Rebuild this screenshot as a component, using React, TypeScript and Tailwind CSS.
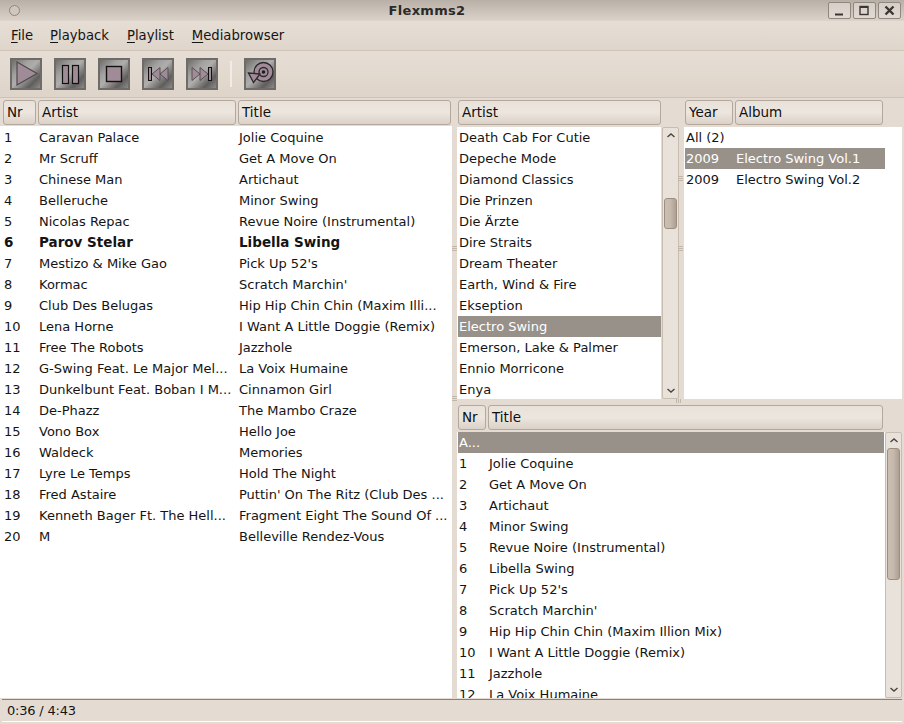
import type { ReactNode } from 'react';

const playlist = [
  ['1', 'Caravan Palace', 'Jolie Coquine'],
  ['2', 'Mr Scruff', 'Get A Move On'],
  ['3', 'Chinese Man', 'Artichaut'],
  ['4', 'Belleruche', 'Minor Swing'],
  ['5', 'Nicolas Repac', 'Revue Noire (Instrumental)'],
  ['6', 'Parov Stelar', 'Libella Swing'],
  ['7', 'Mestizo & Mike Gao', "Pick Up 52's"],
  ['8', 'Kormac', "Scratch Marchin'"],
  ['9', 'Club Des Belugas', 'Hip Hip Chin Chin (Maxim Illi...'],
  ['10', 'Lena Horne', 'I Want A Little Doggie (Remix)'],
  ['11', 'Free The Robots', 'Jazzhole'],
  ['12', 'G-Swing Feat. Le Major Mel...', 'La Voix Humaine'],
  ['13', 'Dunkelbunt Feat. Boban I M...', 'Cinnamon Girl'],
  ['14', 'De-Phazz', 'The Mambo Craze'],
  ['15', 'Vono Box', 'Hello Joe'],
  ['16', 'Waldeck', 'Memories'],
  ['17', 'Lyre Le Temps', 'Hold The Night'],
  ['18', 'Fred Astaire', "Puttin' On The Ritz (Club Des ..."],
  ['19', 'Kenneth Bager Ft. The Hell...', 'Fragment Eight The Sound Of ...'],
  ['20', 'M', 'Belleville Rendez-Vous'],
];

const artists = [
  'Death Cab For Cutie',
  'Depeche Mode',
  'Diamond Classics',
  'Die Prinzen',
  'Die Ärzte',
  'Dire Straits',
  'Dream Theater',
  'Earth, Wind & Fire',
  'Ekseption',
  'Electro Swing',
  'Emerson, Lake & Palmer',
  'Ennio Morricone',
  'Enya',
];

const tracks = [
  'Jolie Coquine',
  'Get A Move On',
  'Artichaut',
  'Minor Swing',
  'Revue Noire (Instrumental)',
  'Libella Swing',
  "Pick Up 52's",
  "Scratch Marchin'",
  'Hip Hip Chin Chin (Maxim Illion Mix)',
  'I Want A Little Doggie (Remix)',
  'Jazzhole',
  'La Voix Humaine',
];

function HeaderCell({ label, className }: { label: string; className: string }) {
  return (
    <div
      className={`h-[25px] shrink-0 rounded-[3px] border border-[#b4a89c] bg-gradient-to-b from-[#e9e2db] via-[#ece6df] to-[#dbd1c7] pl-[3px] text-[13.5px] leading-[23px] text-[#101010] ${className}`}
    >
      {label}
    </div>
  );
}

function ScrollBar({ thumbTop, thumbHeight }: { thumbTop: string; thumbHeight: string }) {
  return (
    <div className="relative h-full w-[17px] shrink-0 rounded-[2px] border border-[#c9bdb0] bg-[#e9e2da]">
      <svg className="absolute left-[3px] top-[4px]" width="10" height="7" viewBox="0 0 10 7">
        <path d="M1.5 5 L5 2 L8.5 5" fill="none" stroke="#4a4540" strokeWidth="1.4" />
      </svg>
      <div
        className={`absolute left-[1px] w-[13px] rounded-[3px] border border-[#9c8f82] bg-gradient-to-r from-[#cbbfb3] via-[#c6b9ac] to-[#ad9f91] ${thumbTop} ${thumbHeight}`}
      />
      <svg className="absolute bottom-[4px] left-[3px]" width="10" height="7" viewBox="0 0 10 7">
        <path d="M1.5 2 L5 5 L8.5 2" fill="none" stroke="#4a4540" strokeWidth="1.4" />
      </svg>
    </div>
  );
}

function ToolButton({ children }: { children: ReactNode }) {
  return (
    <button className="flex h-[32px] w-[32px] items-center justify-center border-2 border-[#6e6b68] bg-[linear-gradient(135deg,#6f6d6a_0%,#a2a09e_30%,#b0aeac_48%,#605e5c_78%,#8d8b89_100%)]">
      <svg width="28" height="28" viewBox="0 0 28 28" strokeLinejoin="miter">
        {children}
      </svg>
    </button>
  );
}

function WinButton({ children }: { children: ReactNode }) {
  return (
    <div className="flex h-[17px] w-[23px] items-center justify-center rounded-[2px] border border-[#8f8880] bg-gradient-to-b from-[#d6cfc7] to-[#e2dad2]">
      <svg width="13" height="13" viewBox="0 0 13 13">
        {children}
      </svg>
    </div>
  );
}

function MenuLabel({ first, rest, gap }: { first: string; rest: string; gap: string }) {
  return (
    <span className={gap}>
      <span className="underline underline-offset-2">{first}</span>
      {rest}
    </span>
  );
}

function GripH({ className }: { className: string }) {
  return (
    <div className={`absolute flex w-[5px] flex-col gap-[1px] ${className}`}>
      <div className="h-[1px] bg-[#c2b6a9]" />
      <div className="h-[1px] bg-[#c2b6a9]" />
      <div className="h-[1px] bg-[#c2b6a9]" />
    </div>
  );
}

export default function App() {
  return (
    <div
      className="relative flex h-[724px] w-[904px] flex-col overflow-hidden bg-[#e4dcd3] text-[13px] text-[#141414]"
      style={{ fontFamily: '"DejaVu Sans", sans-serif' }}
    >
      {/* window title */}
      <div className="flex h-[21px] shrink-0 items-center bg-gradient-to-b from-[#b8afa6] to-[#dcd4cb] pl-[9px] pr-[1px]">
        <div className="h-[11px] w-[11px] rounded-full border border-[#8e877f] bg-[#cfc8c0]" />
        <div className="flex-1 pl-[6px] text-center text-[13px] font-bold leading-[19px] tracking-[0.3px] text-[#2c2a28]">Flexmms2</div>
        <div className="flex gap-[2px] pr-[2px]">
          <WinButton>
            <path d="M2 10.5 H10" stroke="#3a3632" strokeWidth="2" />
          </WinButton>
          <WinButton>
            <rect x="2" y="2.5" width="8" height="8" fill="none" stroke="#3a3632" strokeWidth="1.4" />
            <path d="M2 3 H10" stroke="#3a3632" strokeWidth="2" />
          </WinButton>
          <WinButton>
            <path d="M2.5 2.5 L10.5 10.5 M10.5 2.5 L2.5 10.5" stroke="#3a3632" strokeWidth="2.4" />
          </WinButton>
        </div>
      </div>

      {/* menu bar */}
      <div className="flex h-[30px] shrink-0 items-center border-b border-[#cfc3b5] bg-gradient-to-b from-[#e6ded5] to-[#dfd5cb] pl-[11px] text-[13.2px] leading-[30px]">
        <MenuLabel first="F" rest="ile" gap="mr-[17px]" />
        <MenuLabel first="P" rest="layback" gap="mr-[18px]" />
        <MenuLabel first="P" rest="laylist" gap="mr-[18px]" />
        <MenuLabel first="M" rest="ediabrowser" gap="" />
      </div>

      {/* toolbar */}
      <div className="flex h-[47px] shrink-0 items-center border-b border-[#cfc3b5] bg-gradient-to-b from-[#e6ded5] to-[#ded4c9] pl-[10px]">
        <div className="flex gap-[12px]">
          <ToolButton>
            <path d="M5 2 L25 13.5 L5 25 Z" fill="#a08c97" stroke="#4f484c" strokeWidth="1.2" />
          </ToolButton>
          <ToolButton>
            <rect x="6.5" y="5.5" width="6" height="18" fill="#a08c97" stroke="#111" strokeWidth="1.2" />
            <rect x="16.5" y="5.5" width="6" height="18" fill="#a08c97" stroke="#111" strokeWidth="1.2" />
          </ToolButton>
          <ToolButton>
            <rect x="6.5" y="6.5" width="15" height="15" fill="#a08c97" stroke="#111" strokeWidth="1.4" />
          </ToolButton>
          <ToolButton>
            <rect x="4.5" y="7.5" width="3" height="13" fill="#a08c97" stroke="#111" strokeWidth="1" />
            <path d="M8 14 L16 7.5 V20.5 Z M16 14 L24 7.5 V20.5 Z" fill="#a08c97" stroke="#4f484c" strokeWidth="0.9" />
          </ToolButton>
          <ToolButton>
            <path d="M4 7.5 L12 14 L4 20.5 Z M12 7.5 L20 14 L12 20.5 Z" fill="#a08c97" stroke="#4f484c" strokeWidth="0.9" />
            <rect x="20.5" y="7.5" width="3" height="13" fill="#a08c97" stroke="#111" strokeWidth="1" />
          </ToolButton>
        </div>
        <div className="ml-[12px] h-[26px] w-[2px] bg-[#f1ece6]" />
        <div className="ml-[12px]">
          <ToolButton>
            <circle cx="17.5" cy="12" r="9.5" fill="#a08c97" stroke="#2e282b" strokeWidth="1.3" />
            <circle cx="17.5" cy="12" r="4.5" fill="#a08c97" stroke="#2e282b" strokeWidth="1.3" />
            <circle cx="17.5" cy="12" r="1.8" fill="#1c1a1b" />
            <path d="M2.5 13 L14 14 L7.5 22.5 Z" fill="#a08c97" stroke="#2e282b" strokeWidth="1.3" />
          </ToolButton>
        </div>
      </div>

      <div className="flex min-h-0 flex-1">
        {/* playlist */}
        <div className="flex w-[452px] shrink-0 flex-col pl-[3px] pt-[2px]">
          <div className="flex shrink-0 gap-[2px]">
            <HeaderCell label="Nr" className="w-[33px]" />
            <HeaderCell label="Artist" className="w-[198px]" />
            <HeaderCell label="Title" className="w-[213px]" />
          </div>
          <div className="-ml-[3px] mt-[1px] flex-1 bg-white pt-[1px]">
            {playlist.map(([nr, artist, title]) => (
              <div key={nr} className={`flex h-[21px] items-center ${nr === '6' ? 'text-[13.5px] font-bold' : ''}`}>
                <div className="w-[39px] shrink-0 pl-[4px]">{nr}</div>
                <div className="w-[200px] shrink-0 whitespace-nowrap">{artist}</div>
                <div className="whitespace-nowrap">{title}</div>
              </div>
            ))}
          </div>
        </div>

        <div className="flex min-w-0 flex-1 flex-col">
          <div className="flex h-[301px] shrink-0">
            {/* artist browser */}
            <div className="flex w-[227px] shrink-0 flex-col pl-[6px] pt-[2px]">
              <HeaderCell label="Artist" className="w-[203px]" />
              <div className="-ml-[1px] mt-[2px] flex min-h-0 flex-1">
                <div className="w-[204px] shrink-0 overflow-hidden bg-white pl-[1px]">
                  {artists.map((artist) => (
                    <div
                      key={artist}
                      className={`h-[21px] pl-[1px] leading-[21px] ${artist === 'Electro Swing' ? 'bg-[#989189] text-white' : ''}`}
                    >
                      {artist}
                    </div>
                  ))}
                </div>
                <div className="ml-[1px]">
                  <ScrollBar thumbTop="top-[70px]" thumbHeight="h-[31px]" />
                </div>
              </div>
            </div>

            {/* album browser */}
            <div className="flex min-w-0 flex-1 flex-col pt-[2px]">
              <div className="flex shrink-0 gap-[2px] pl-[6px]">
                <HeaderCell label="Year" className="w-[48px]" />
                <HeaderCell label="Album" className="w-[148px]" />
              </div>
              <div className="ml-[5px] mr-[2px] mt-[2px] flex-1 bg-white pl-[1px]">
                <div className="h-[21px] pl-[1px] leading-[21px]">All (2)</div>
                <div className="flex h-[21px] w-[200px] bg-[#989189] leading-[21px] text-white">
                  <span className="w-[51px] pl-[1px]">2009</span>
                  <span>Electro Swing Vol.1</span>
                </div>
                <div className="flex h-[21px] leading-[21px]">
                  <span className="w-[51px] pl-[1px]">2009</span>
                  <span>Electro Swing Vol.2</span>
                </div>
              </div>
            </div>
          </div>

          {/* tracks */}
          <div className="flex min-h-0 flex-1 flex-col pl-[6px] pt-[6px]">
            <div className="flex shrink-0 gap-[2px]">
              <HeaderCell label="Nr" className="w-[28px]" />
              <HeaderCell label="Title" className="w-[395px]" />
            </div>
            <div className="-ml-[1px] mt-[2px] flex min-h-0 flex-1">
              <div className="w-[428px] shrink-0 overflow-hidden bg-white pl-[1px] pr-[1px]">
                <div className="h-[21px] bg-[#989189] pl-[1px] leading-[21px] text-white">A...</div>
                {tracks.map((title, i) => (
                  <div key={title} className="flex h-[21px] leading-[21px]">
                    <span className="w-[31px] shrink-0 pl-[1px]">{i + 1}</span>
                    <span className="whitespace-nowrap">{title}</span>
                  </div>
                ))}
              </div>
              <ScrollBar thumbTop="top-[15px]" thumbHeight="h-[132px]" />
            </div>
          </div>
        </div>
      </div>

      {/* status bar */}
      <div className="mx-[2px] mb-[2px] mt-[1px] flex h-[23px] shrink-0 items-center border-b border-t border-b-white border-t-[#8a837a] pl-[5px] text-[13px] tracking-[-0.2px]">
        0:36 / 4:43
      </div>

      {/* splitter handles */}
      <GripH className="left-[452px] top-[246px]" />
      <GripH className="left-[452px] top-[396px]" />
      <GripH className="left-[678px] top-[176px]" />
      <GripH className="left-[678px] top-[246px]" />
      <div className="absolute left-[676px] top-[399px] flex h-[4px] gap-[1px]">
        <div className="w-[1px] bg-[#c2b6a9]" />
        <div className="w-[1px] bg-[#c2b6a9]" />
        <div className="w-[1px] bg-[#c2b6a9]" />
      </div>
    </div>
  );
}
